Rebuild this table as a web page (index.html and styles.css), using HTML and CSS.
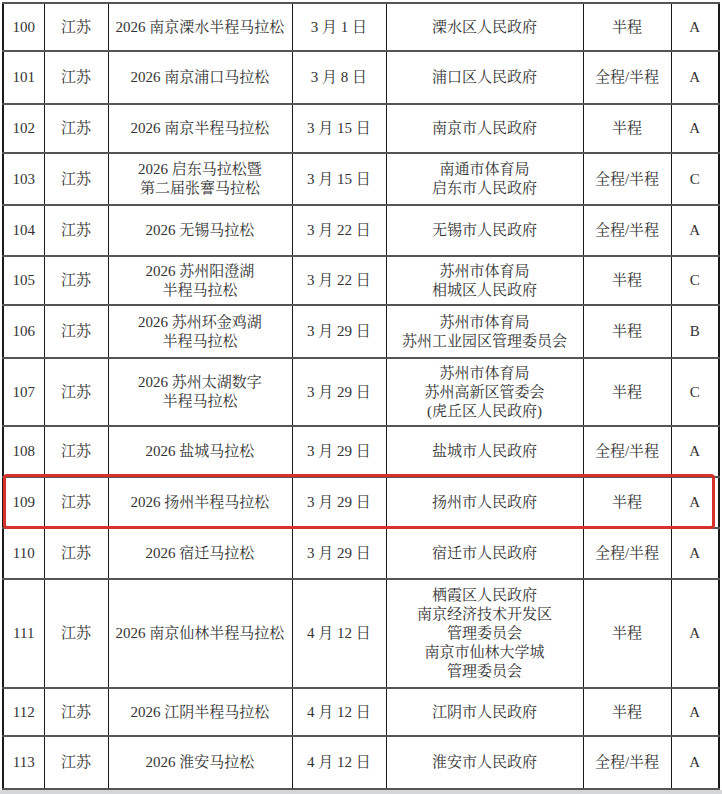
FILE: index.html
```html
<!DOCTYPE html>
<html lang="zh-CN">
<head>
<meta charset="utf-8">
<title>2026 江苏赛事</title>
<link rel="stylesheet" href="styles.css">
</head>
<body>
<div class="wrap">
<table class="races">
<colgroup>
<col class="c-no"><col class="c-prov"><col class="c-name"><col class="c-date"><col class="c-org"><col class="c-type"><col class="c-grade">
</colgroup>
<tbody>
<tr class="h48"><td>100</td><td>江苏</td><td>2026 南京溧水半程马拉松</td><td>3 月 1 日</td><td>溧水区人民政府</td><td>半程</td><td>A</td></tr>
<tr class="h53"><td>101</td><td>江苏</td><td>2026 南京浦口马拉松</td><td>3 月 8 日</td><td>浦口区人民政府</td><td>全程/半程</td><td>A</td></tr>
<tr class="h49"><td>102</td><td>江苏</td><td>2026 南京半程马拉松</td><td>3 月 15 日</td><td>南京市人民政府</td><td>半程</td><td>A</td></tr>
<tr class="h52"><td>103</td><td>江苏</td><td>2026 启东马拉松暨<br>第二届张謇马拉松</td><td>3 月 15 日</td><td>南通市体育局<br>启东市人民政府</td><td>全程/半程</td><td>C</td></tr>
<tr class="h51"><td>104</td><td>江苏</td><td>2026 无锡马拉松</td><td>3 月 22 日</td><td>无锡市人民政府</td><td>全程/半程</td><td>A</td></tr>
<tr class="h49"><td>105</td><td>江苏</td><td>2026 苏州阳澄湖<br>半程马拉松</td><td>3 月 22 日</td><td>苏州市体育局<br>相城区人民政府</td><td>半程</td><td>C</td></tr>
<tr class="h53"><td>106</td><td>江苏</td><td>2026 苏州环金鸡湖<br>半程马拉松</td><td>3 月 29 日</td><td>苏州市体育局<br>苏州工业园区管理委员会</td><td>半程</td><td>B</td></tr>
<tr class="h68"><td>107</td><td>江苏</td><td>2026 苏州太湖数字<br>半程马拉松</td><td>3 月 29 日</td><td>苏州市体育局<br>苏州高新区管委会<br>(虎丘区人民政府)</td><td>半程</td><td>C</td></tr>
<tr class="h51"><td>108</td><td>江苏</td><td>2026 盐城马拉松</td><td>3 月 29 日</td><td>盐城市人民政府</td><td>全程/半程</td><td>A</td></tr>
<tr class="h51 marked"><td>109</td><td>江苏</td><td>2026 扬州半程马拉松</td><td>3 月 29 日</td><td>扬州市人民政府</td><td>半程</td><td>A<span class="highlight"></span></td></tr>
<tr class="h51"><td>110</td><td>江苏</td><td>2026 宿迁马拉松</td><td>3 月 29 日</td><td>宿迁市人民政府</td><td>全程/半程</td><td>A</td></tr>
<tr class="h109"><td>111</td><td>江苏</td><td>2026 南京仙林半程马拉松</td><td>4 月 12 日</td><td>栖霞区人民政府<br>南京经济技术开发区<br>管理委员会<br>南京市仙林大学城<br>管理委员会</td><td>半程</td><td>A</td></tr>
<tr class="h48"><td>112</td><td>江苏</td><td>2026 江阴半程马拉松</td><td>4 月 12 日</td><td>江阴市人民政府</td><td>半程</td><td>A</td></tr>
<tr class="h53"><td>113</td><td>江苏</td><td>2026 淮安马拉松</td><td>4 月 12 日</td><td>淮安市人民政府</td><td>全程/半程</td><td>A</td></tr>
</tbody>
</table>
</div>
<div class="footer-strip"></div>
</body>
</html>
```

FILE: styles.css
```css
html, body {
  margin: 0;
  padding: 0;
  background: #ffffff;
}
body {
  font-family: "Liberation Serif", "Noto Serif CJK SC", "Noto Sans CJK SC", serif;
  color: #333333;
}
.wrap {
  position: relative;
  padding: 2px 0 0 2px;
  width: 718px;
}
.races {
  border-collapse: collapse;
  table-layout: fixed;
  width: 717px;
  border: 2px solid #1a1a1a;
}
.c-no { width: 41px; }
.c-prov { width: 64px; }
.c-name { width: 184px; }
.c-date { width: 94px; }
.c-org { width: 197px; }
.c-type { width: 88px; }
.c-grade { width: 48px; }

.races td {
  border-left: 1px solid #1a1a1a;
  border-right: 1px solid #1a1a1a;
  border-top: 2px solid #555555;
  border-bottom: 2px solid #555555;
  text-align: center;
  vertical-align: middle;
  font-size: 15px;
  line-height: 19px;
  padding: 0 2px;
  white-space: nowrap;
}
.races tr.h48 td { height: 46px; }
.races tr.h49 td { height: 47px; }
.races tr.h51 td { height: 49px; }
.races tr.h52 td { height: 50px; }
.races tr.h53 td { height: 51px; }
.races tr.h68 td { height: 66px; }
.races tr.h109 td { height: 107px; }

.marked td:last-child {
  position: relative;
}
.highlight {
  position: absolute;
  right: 3px;
  top: -4px;
  width: 712px;
  height: 55px;
  box-sizing: border-box;
  border: 3px solid #d8302b;
  border-radius: 4px;
  pointer-events: none;
}
.footer-strip {
  height: 6px;
  margin-top: 0;
  background: #d4d6d8;
}
```
